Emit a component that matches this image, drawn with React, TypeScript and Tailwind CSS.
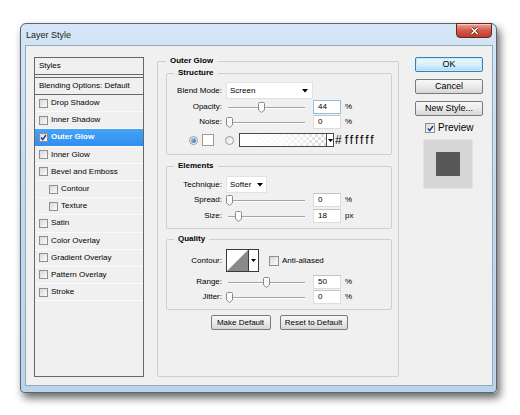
import type { ReactNode } from 'react'

const STYLE_ROWS = [
  { name: 'Drop Shadow' },
  { name: 'Inner Shadow' },
  { name: 'Outer Glow', checked: true, selected: true },
  { name: 'Inner Glow' },
  { name: 'Bevel and Emboss' },
  { name: 'Contour', indent: true },
  { name: 'Texture', indent: true },
  { name: 'Satin' },
  { name: 'Color Overlay' },
  { name: 'Gradient Overlay' },
  { name: 'Pattern Overlay' },
  { name: 'Stroke' },
]

function Check({ checked = false, size = 'h-[9px] w-[9px]' }: { checked?: boolean; size?: string }) {
  return (
    <span
      className={`flex ${size} shrink-0 items-center justify-center border border-[#8e8f8f] bg-gradient-to-br from-[#d9d9d9] to-[#fbfbfb]`}
    >
      {checked && (
        <svg width="7" height="7" viewBox="0 0 7 7">
          <path d="M1 3.5 L2.8 5.6 L6 1" fill="none" stroke="#1c3d8c" strokeWidth="1.5" />
        </svg>
      )}
    </span>
  )
}

function Arrow() {
  return (
    <svg width="6" height="4" viewBox="0 0 6 4">
      <path d="M0 0 H6 L3 3.5 Z" fill="#000" />
    </svg>
  )
}

function Group({
  title,
  className = '',
  titleClass = 'ml-[7px]',
  children,
}: {
  title: string
  className?: string
  titleClass?: string
  children: ReactNode
}) {
  return (
    <div className={`rounded-[2px] border border-[#cfcfcf] ${className}`}>
      <div className={`-mt-[6px] w-fit bg-[#f0f0f0] px-[4px] text-[8px] leading-[10px] font-bold ${titleClass}`}>
        {title}
      </div>
      {children}
    </div>
  )
}

function Label({ children }: { children: ReactNode }) {
  return <span className="w-[55px] shrink-0 text-right">{children}</span>
}

function SliderRow({
  label,
  value,
  unit,
  thumb,
  focus = false,
  className = '',
}: {
  label: string
  value: string
  unit: string
  thumb: number
  focus?: boolean
  className?: string
}) {
  return (
    <div className={`flex h-[14px] items-center ${className}`}>
      <Label>{label}</Label>
      <div className="relative ml-[4px] h-[14px] w-[87px] shrink-0">
        <div className="absolute left-[2px] top-[7px] h-[2px] w-[77px] border-t border-[#a3a3a3] bg-white" />
        <svg
          className="absolute top-[2px]"
          style={{ left: thumb }}
          width="7"
          height="11"
          viewBox="0 0 7 11"
        >
          <path
            d="M1.5 0.5 H5.5 Q6.5 0.5 6.5 1.5 V8 L3.5 10.5 L0.5 8 V1.5 Q0.5 0.5 1.5 0.5 Z"
            fill="#fbfbfb"
            stroke="#8a8a8a"
          />
        </svg>
      </div>
      <div
        className={`h-[14px] w-[28px] shrink-0 border bg-white pl-[4px] leading-[12px] ${
          focus ? 'border-[#8ec1e6]' : 'border-[#dcdcdc] border-t-[#c4c4c4]'
        }`}
      >
        {value}
      </div>
      <span className="ml-[4px]">{unit}</span>
    </div>
  )
}

function Radio({ on = false }: { on?: boolean }) {
  return (
    <span className="flex h-[9px] w-[9px] shrink-0 items-center justify-center rounded-full border border-[#9c9c9c] bg-gradient-to-br from-[#e2e2e2] to-white">
      {on && <span className="h-[5px] w-[5px] rounded-full bg-gradient-to-br from-[#9fd1f4] to-[#1f6fb8]" />}
    </span>
  )
}

function SmallButton({ children, width }: { children: ReactNode; width: string }) {
  return (
    <div
      className={`flex h-[15px] ${width} items-center justify-center rounded-[2px] border border-[#7a7a7a] bg-gradient-to-b from-[#f7f7f7] via-[#ebebeb] to-[#d6d6d6] text-[8px]`}
    >
      {children}
    </div>
  )
}

function SideButton({ children, primary = false }: { children: ReactNode; primary?: boolean }) {
  return (
    <div
      className={`flex h-[15px] w-[68px] items-center justify-center rounded-[2px] border text-[9px] ${
        primary
          ? 'border-[#3c7fb1] bg-gradient-to-b from-[#eaf6fd] via-[#d9f0fc] to-[#a9dbf6] shadow-[inset_0_0_0_1px_#c6e9fb]'
          : 'border-[#7a7a7a] bg-gradient-to-b from-[#f7f7f7] via-[#ebebeb] to-[#d6d6d6]'
      }`}
    >
      {children}
    </div>
  )
}

export default function App() {
  return (
    <div className="h-[415px] w-[520px] bg-white pl-[20px] pt-[23px] font-['Liberation_Sans',Arial,sans-serif] text-[8px] text-black">
      {/* Window frame */}
      <div className="flex h-[370px] w-[477px] flex-col rounded-t-[6px] rounded-b-[4px] border border-[#55657a] bg-gradient-to-b from-[#d5e6f6] via-[#c4d9ee] to-[#bcd3ea] shadow-[3px_5px_8px_rgba(0,0,0,0.6)]">
        <div className="flex h-[21px] shrink-0 items-start justify-between pl-[5px] pr-[4px]">
          <span className="self-center text-[9px] leading-[10px] text-[#1b1b1b]">Layer Style</span>
          <div className="-mt-[1px] flex h-[15px] w-[36px] items-center justify-center rounded-b-[4px] border border-[#6a261e] bg-gradient-to-b from-[#e7a497] via-[#d25a4b] to-[#bf3b2b] shadow-[inset_0_1px_0_rgba(255,255,255,0.45)]">
            <svg width="9" height="8" viewBox="0 0 9 8">
              <path d="M1.5 1 L7.5 7 M7.5 1 L1.5 7" stroke="#5b1d16" strokeWidth="3" />
              <path d="M1.5 1 L7.5 7 M7.5 1 L1.5 7" stroke="#fff" strokeWidth="1.6" />
            </svg>
          </div>
        </div>

        {/* Client area */}
        <div className="mb-[6px] ml-[4px] mr-[3px] flex h-[341px] border border-[#93a9bf] bg-[#f0f0f0] pl-[8px] pt-[11px]">
          {/* Styles list */}
          <div className="flex h-[320px] w-[110px] shrink-0 flex-col border border-[#676767]">
            <div className="flex h-[17px] items-center border-b border-[#676767] pl-[4px]">Styles</div>
            <div className="mt-[2px] flex h-[18px] items-center border-y border-[#676767] pl-[4px]">
              Blending Options: Default
            </div>
            {STYLE_ROWS.map((row) => (
              <div
                key={row.name}
                className={`flex h-[17.2px] items-center gap-[3px] border-b border-[#fafafa] ${
                  row.indent ? 'pl-[14px]' : 'pl-[4px]'
                } ${row.selected ? 'bg-gradient-to-b from-[#47a3f5] to-[#2f8ff0] font-bold text-white' : ''}`}
              >
                <Check checked={row.checked} />
                <span>{row.name}</span>
              </div>
            ))}
          </div>

          {/* Outer Glow */}
          <Group
            title="Outer Glow"
            titleClass="ml-0"
            className="ml-[13px] mt-[4px] h-[316px] w-[242px] shrink-0 pl-[8px] pr-[6px]"
          >
            <Group title="Structure" className="mt-[7px] pb-[7px]">
              <div className="mt-[4px] flex h-[17px] items-center">
                <Label>Blend Mode:</Label>
                <div className="ml-[4px] flex h-[17px] w-[87px] items-center justify-between border border-[#e2e2e2] bg-white pl-[3px] pr-[4px]">
                  <span>Screen</span>
                  <Arrow />
                </div>
              </div>
              <SliderRow className="mt-[1px]" label="Opacity:" value="44" unit="%" thumb={32} focus />
              <SliderRow className="mt-[1px]" label="Noise:" value="0" unit="%" thumb={0} />
              <div className="mt-[4px] flex h-[14px] items-center pl-[22px]">
                <Radio on />
                <span className="ml-[4px] h-[12px] w-[12px] border border-[#9a9a9a] bg-white" />
                <span className="ml-[11px]">
                  <Radio />
                </span>
                <div className="ml-[5px] flex h-[14px] items-stretch border border-[#4a4a4a]">
                  <div className="w-[86px] bg-[repeating-conic-gradient(#dcdcdc_0_25%,#ffffff_0_50%)] bg-[length:6px_6px]">
                    <div className="h-full w-full bg-gradient-to-r from-white via-white/80 to-white/0" />
                  </div>
                  <div className="flex w-[7px] items-center justify-center border-l border-[#4a4a4a] bg-white">
                    <svg width="5" height="3" viewBox="0 0 5 3">
                      <path d="M0 0 H5 L2.5 3 Z" fill="#000" />
                    </svg>
                  </div>
                </div>
                <span className="ml-[1px] text-[12px] leading-[12px]">#</span>
                <span className="ml-[3px] text-[12px] leading-[12px] tracking-[2px]">ffffff</span>
              </div>
            </Group>

            <Group title="Elements" className="mt-[11px] pb-[5px]">
              <div className="mt-[5px] flex h-[17px] items-center">
                <Label>Technique:</Label>
                <div className="ml-[4px] flex h-[17px] w-[41px] items-center justify-between border border-[#e2e2e2] bg-white pl-[3px] pr-[3px]">
                  <span>Softer</span>
                  <Arrow />
                </div>
              </div>
              <SliderRow label="Spread:" value="0" unit="%" thumb={0} />
              <SliderRow className="mt-[2px]" label="Size:" value="18" unit="px" thumb={9} />
            </Group>

            <Group title="Quality" className="mt-[10px] pb-[5px]">
              <div className="mt-[5px] flex h-[23px] items-center">
                <Label>Contour:</Label>
                <div className="ml-[4px] flex h-[23px] border border-[#3a3a3a] bg-white">
                  <svg width="21" height="21" viewBox="0 0 21 21">
                    <path d="M0 21 L21 0 V21 Z" fill="#8a8a8a" />
                  </svg>
                  <div className="flex w-[10px] items-center justify-center border-l border-[#3a3a3a]">
                    <svg width="5" height="3" viewBox="0 0 5 3">
                      <path d="M0 0 H5 L2.5 3 Z" fill="#000" />
                    </svg>
                  </div>
                </div>
                <span className="ml-[10px]">
                  <Check size="h-[10px] w-[10px]" />
                </span>
                <span className="ml-[3px]">Anti-aliased</span>
              </div>
              <SliderRow className="mt-[3px]" label="Range:" value="50" unit="%" thumb={37} />
              <SliderRow className="mt-[1px]" label="Jitter:" value="0" unit="%" thumb={0} />
            </Group>

            <div className="mt-[5px] flex justify-center gap-[9px]">
              <SmallButton width="w-[60px]">Make Default</SmallButton>
              <SmallButton width="w-[68px]">Reset to Default</SmallButton>
            </div>
          </Group>

          {/* Side buttons */}
          <div className="ml-[16px] flex w-[68px] shrink-0 flex-col">
            <div className="flex flex-col gap-[7px]">
              <SideButton primary>OK</SideButton>
              <SideButton>Cancel</SideButton>
              <SideButton>New Style...</SideButton>
            </div>
            <div className="mt-[6px] flex h-[12px] items-center pl-[10px]">
              <Check checked size="h-[10px] w-[10px]" />
              <span className="ml-[3px] text-[10px] leading-[12px]">Preview</span>
            </div>
            <div className="ml-[8px] mt-[5px] flex h-[50px] w-[50px] items-center justify-center border border-[#e4e4e4] bg-[#d6d6d6]">
              <div className="h-[24px] w-[24px] bg-[#585858]" />
            </div>
          </div>
        </div>
      </div>
    </div>
  )
}
